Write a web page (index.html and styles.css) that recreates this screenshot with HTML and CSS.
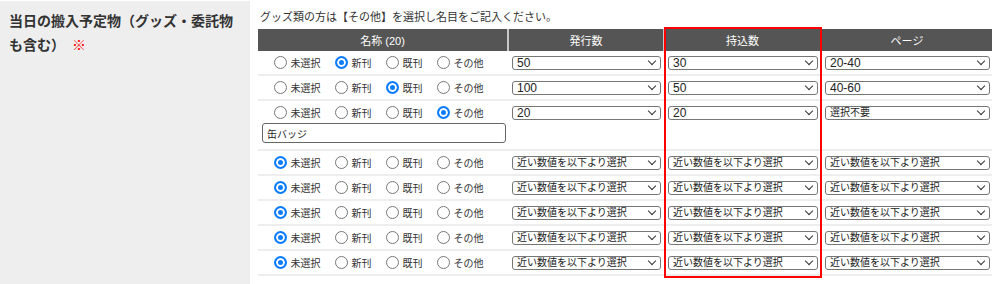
FILE: index.html
```html
<!DOCTYPE html>
<html lang="ja">
<head>
    <meta charset="UTF-8">
    <meta name="viewport" content="width=device-width, initial-scale=1.0">
    <title>当日の搬入予定物</title>
    <link rel="stylesheet" href="styles.css">
</head>
<body>
    <div class="form-row">
        <div class="form-label">当日の搬入予定物（グッズ・委託物も含む）<span class="req">※</span></div>
        <div class="form-field">
            <p class="note">グッズ類の方は【その他】を選択し名目をご記入ください。</p>
            <div class="items-wrap">
                <table class="items">
                    <colgroup>
                        <col class="c-name">
                        <col class="c-issue">
                        <col class="c-bring">
                        <col class="c-page">
                    </colgroup>
                    <thead>
                        <tr>
                            <th>名称 (20)</th>
                            <th>発行数</th>
                            <th>持込数</th>
                            <th>ページ</th>
                        </tr>
                    </thead>
                    <tbody>
                        <tr>
                            <td class="name">
                                <div class="radios">
                                    <label><input type="radio" name="kind1">未選択</label>
                                    <label><input type="radio" name="kind1" checked>新刊</label>
                                    <label><input type="radio" name="kind1">既刊</label>
                                    <label><input type="radio" name="kind1">その他</label>
                                </div>
                            </td>
                            <td><span class="sel"><select class="num"><option>50</option></select></span></td>
                            <td><span class="sel"><select class="num"><option>30</option></select></span></td>
                            <td><span class="sel"><select class="num"><option>20-40</option></select></span></td>
                        </tr>
                        <tr>
                            <td class="name">
                                <div class="radios">
                                    <label><input type="radio" name="kind2">未選択</label>
                                    <label><input type="radio" name="kind2">新刊</label>
                                    <label><input type="radio" name="kind2" checked>既刊</label>
                                    <label><input type="radio" name="kind2">その他</label>
                                </div>
                            </td>
                            <td><span class="sel"><select class="num"><option>100</option></select></span></td>
                            <td><span class="sel"><select class="num"><option>50</option></select></span></td>
                            <td><span class="sel"><select class="num"><option>40-60</option></select></span></td>
                        </tr>
                        <tr>
                            <td class="name">
                                <div class="radios">
                                    <label><input type="radio" name="kind3">未選択</label>
                                    <label><input type="radio" name="kind3">新刊</label>
                                    <label><input type="radio" name="kind3">既刊</label>
                                    <label><input type="radio" name="kind3" checked>その他</label>
                                </div>
                                <input type="text" class="other-input" value="缶バッジ">
                            </td>
                            <td><span class="sel"><select class="num"><option>20</option></select></span></td>
                            <td><span class="sel"><select class="num"><option>20</option></select></span></td>
                            <td><span class="sel"><select><option>選択不要</option></select></span></td>
                        </tr>
                        <tr>
                            <td class="name">
                                <div class="radios">
                                    <label><input type="radio" name="kind4" checked>未選択</label>
                                    <label><input type="radio" name="kind4">新刊</label>
                                    <label><input type="radio" name="kind4">既刊</label>
                                    <label><input type="radio" name="kind4">その他</label>
                                </div>
                            </td>
                            <td><span class="sel"><select><option>近い数値を以下より選択</option></select></span></td>
                            <td><span class="sel"><select><option>近い数値を以下より選択</option></select></span></td>
                            <td><span class="sel"><select><option>近い数値を以下より選択</option></select></span></td>
                        </tr>
                        <tr>
                            <td class="name">
                                <div class="radios">
                                    <label><input type="radio" name="kind5" checked>未選択</label>
                                    <label><input type="radio" name="kind5">新刊</label>
                                    <label><input type="radio" name="kind5">既刊</label>
                                    <label><input type="radio" name="kind5">その他</label>
                                </div>
                            </td>
                            <td><span class="sel"><select><option>近い数値を以下より選択</option></select></span></td>
                            <td><span class="sel"><select><option>近い数値を以下より選択</option></select></span></td>
                            <td><span class="sel"><select><option>近い数値を以下より選択</option></select></span></td>
                        </tr>
                        <tr>
                            <td class="name">
                                <div class="radios">
                                    <label><input type="radio" name="kind6" checked>未選択</label>
                                    <label><input type="radio" name="kind6">新刊</label>
                                    <label><input type="radio" name="kind6">既刊</label>
                                    <label><input type="radio" name="kind6">その他</label>
                                </div>
                            </td>
                            <td><span class="sel"><select><option>近い数値を以下より選択</option></select></span></td>
                            <td><span class="sel"><select><option>近い数値を以下より選択</option></select></span></td>
                            <td><span class="sel"><select><option>近い数値を以下より選択</option></select></span></td>
                        </tr>
                        <tr>
                            <td class="name">
                                <div class="radios">
                                    <label><input type="radio" name="kind7" checked>未選択</label>
                                    <label><input type="radio" name="kind7">新刊</label>
                                    <label><input type="radio" name="kind7">既刊</label>
                                    <label><input type="radio" name="kind7">その他</label>
                                </div>
                            </td>
                            <td><span class="sel"><select><option>近い数値を以下より選択</option></select></span></td>
                            <td><span class="sel"><select><option>近い数値を以下より選択</option></select></span></td>
                            <td><span class="sel"><select><option>近い数値を以下より選択</option></select></span></td>
                        </tr>
                        <tr>
                            <td class="name">
                                <div class="radios">
                                    <label><input type="radio" name="kind8" checked>未選択</label>
                                    <label><input type="radio" name="kind8">新刊</label>
                                    <label><input type="radio" name="kind8">既刊</label>
                                    <label><input type="radio" name="kind8">その他</label>
                                </div>
                            </td>
                            <td><span class="sel"><select><option>近い数値を以下より選択</option></select></span></td>
                            <td><span class="sel"><select><option>近い数値を以下より選択</option></select></span></td>
                            <td><span class="sel"><select><option>近い数値を以下より選択</option></select></span></td>
                        </tr>
                    </tbody>
                </table>
                <div class="highlight"></div>
            </div>
        </div>
    </div>
</body>
</html>
```

FILE: styles.css
```css
body {
    margin: 0;
    font-family: "Liberation Sans", "Noto Sans CJK JP", sans-serif;
    color: #333;
}
.form-row {
    display: flex;
    margin-top: 1px;
}
.form-label {
    flex: none;
    width: 250px;
    box-sizing: border-box;
    padding: 7px 9px;
    background: #eee;
    font-family: "Noto Sans CJK JP", sans-serif;
    font-size: 14px;
    line-height: 24px;
    font-weight: bold;
}
.req {
    display: inline-block;
    margin-left: 7px;
    color: #f00;
    font-weight: normal;
}
.form-field {
    padding: 8px 0 10px 8px;
}
.note {
    margin: 0 0 4px 2px;
    font-size: 11px;
    line-height: 16px;
}
.items-wrap {
    position: relative;
    width: 734px;
}
.items {
    width: 734px;
    table-layout: fixed;
    border-collapse: separate;
    border-spacing: 0;
}
.c-name { width: 249px; }
.c-issue { width: 156px; }
.c-bring { width: 157px; }
.c-page { width: 172px; }
.items th {
    height: 22px;
    padding: 0;
    background: #555;
    color: #fff;
    font-size: 11px;
    font-weight: normal;
    border-left: 2px solid #c8c8c8;
}
.items th:first-child {
    border-left: none;
}
.items td {
    padding: 5px 2px 4px 5px;
    border-bottom: 2px solid #eee;
    vertical-align: top;
}
.items td.name {
    padding: 1px 0;
}
.radios {
    display: flex;
    align-items: center;
    justify-content: center;
    gap: 14px;
    height: 21px;
    padding-right: 8px;
    font-size: 10px;
}
.radios label {
    display: flex;
    align-items: center;
}
.radios input {
    appearance: none;
    width: 13px;
    height: 13px;
    margin: 0 4px 0 0;
    box-sizing: border-box;
    border: 1px solid #777;
    border-radius: 50%;
    background: #fff;
}
.radios input:checked {
    border: 2px solid #0b7cff;
    background: #0b7cff;
    box-shadow: inset 0 0 0 2px #fff;
}
.other-input {
    display: block;
    width: 244px;
    height: 20px;
    box-sizing: border-box;
    margin: 0 0 5px 4px;
    padding: 0 4px;
    border: 1px solid #666;
    border-radius: 3px;
    font-family: inherit;
    font-size: 10px;
    color: #222;
}
.sel {
    position: relative;
    display: block;
}
.sel::after {
    content: "";
    position: absolute;
    right: 6px;
    top: 2px;
    width: 5px;
    height: 5px;
    border-right: 1px solid #333;
    border-bottom: 1px solid #333;
    transform: rotate(45deg);
    pointer-events: none;
}
.sel select {
    appearance: none;
    display: block;
    width: 100%;
    height: 14px;
    box-sizing: border-box;
    padding: 0 14px 0 4px;
    border: 1px solid #777;
    border-radius: 3px;
    background: #fff;
    font-family: inherit;
    font-size: 10px;
    line-height: 12px;
    color: #222;
}
.sel select.num {
    font-size: 12px;
}
.highlight {
    position: absolute;
    left: 406px;
    top: -2px;
    width: 158px;
    height: 251px;
    box-sizing: border-box;
    border: 2px solid #f00;
    pointer-events: none;
}
```
